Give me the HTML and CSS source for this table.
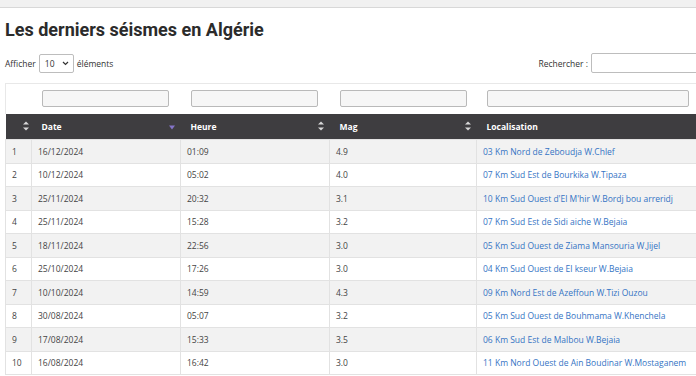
FILE: index.html
```html
<!DOCTYPE html>
<html lang="fr">
<head>
<meta charset="utf-8">
<title>Séismes</title>
<link rel="stylesheet" href="styles.css">
</head>
<body>
<div class="topbar"></div>
<div class="page">
  <h1 class="title">Les derniers séismes en Algérie</h1>
  <div class="controls">
    <div class="length">Afficher <span class="select">10 <svg width="7" height="5" viewBox="0 0 7 5"><path d="M1 1l2.5 2.5L6 1" fill="none" stroke="#333" stroke-width="1.2"/></svg></span> éléments</div>
    <div class="search">Rechercher : <span class="search-input"></span></div>
  </div>
  <table class="quakes">
    <colgroup><col class="c0"><col class="c1"><col class="c2"><col class="c3"><col class="c4"></colgroup>
    <thead>
      <tr class="filters">
        <td></td>
        <td><span class="finput"></span></td>
        <td><span class="finput"></span></td>
        <td><span class="finput"></span></td>
        <td><span class="finput wide"></span></td>
      </tr>
      <tr class="head">
        <th><span class="sort both"></span></th>
        <th>Date<span class="sort desc"></span></th>
        <th>Heure<span class="sort both"></span></th>
        <th>Mag<span class="sort both"></span></th>
        <th>Localisation<span class="sort both"></span></th>
      </tr>
    </thead>
    <tbody>
      <tr><td>1</td><td>16/12/2024</td><td>01:09</td><td>4.9</td><td><a href="#">03 Km Nord de Zeboudja W.Chlef</a></td></tr>
      <tr><td>2</td><td>10/12/2024</td><td>05:02</td><td>4.0</td><td><a href="#">07 Km Sud Est de Bourkika W.Tipaza</a></td></tr>
      <tr><td>3</td><td>25/11/2024</td><td>20:32</td><td>3.1</td><td><a href="#">10 Km Sud Ouest d'El M'hir W.Bordj bou arreridj</a></td></tr>
      <tr><td>4</td><td>25/11/2024</td><td>15:28</td><td>3.2</td><td><a href="#">07 Km Sud Est de Sidi aiche W.Bejaia</a></td></tr>
      <tr><td>5</td><td>18/11/2024</td><td>22:56</td><td>3.0</td><td><a href="#">05 Km Sud Ouest de Ziama Mansouria W.Jijel</a></td></tr>
      <tr><td>6</td><td>25/10/2024</td><td>17:26</td><td>3.0</td><td><a href="#">04 Km Sud Ouest de El kseur W.Bejaia</a></td></tr>
      <tr><td>7</td><td>10/10/2024</td><td>14:59</td><td>4.3</td><td><a href="#">09 Km Nord Est de Azeffoun W.Tizi Ouzou</a></td></tr>
      <tr><td>8</td><td>30/08/2024</td><td>05:07</td><td>3.2</td><td><a href="#">05 Km Sud Ouest de Bouhmama W.Khenchela</a></td></tr>
      <tr><td>9</td><td>17/08/2024</td><td>15:33</td><td>3.5</td><td><a href="#">06 Km Sud Est de Malbou W.Bejaia</a></td></tr>
      <tr><td>10</td><td>16/08/2024</td><td>16:42</td><td>3.0</td><td><a href="#">11 Km Nord Ouest de Ain Boudinar W.Mostaganem</a></td></tr>
    </tbody>
  </table>
</div>
</body>
</html>
```
FILE: styles.css
```css
html, body { margin: 0; padding: 0; overflow: hidden; background: #fff; }
body { font-family: "Open Sans", "Noto Sans", sans-serif; color: #333; font-size: 8.5px; width: 720px; }
.topbar { height: 7px; background: #f1f1f1; border-bottom: 1px solid #d8d8d8; }
.page { padding-left: 5px; }
.title { font-family: Roboto, "Liberation Sans", sans-serif; font-weight: 700; font-size: 18px; color: #2b2b2b; margin: 11px 0 0; line-height: 22px; }
.controls { display: flex; justify-content: space-between; align-items: center; margin-top: 12px; height: 20px; }
.length { display: flex; align-items: center; gap: 3px; }
.select { display: inline-flex; align-items: center; justify-content: space-between; box-sizing: border-box; width: 35px; height: 19px; border: 1px solid #bdbdbd; border-radius: 2px; padding: 0 4px 0 5px; }
.search { display: flex; align-items: center; gap: 3px; }
.search-input { display: inline-block; width: 129px; height: 20px; border: 1px solid #bdbdbd; border-radius: 2px; box-sizing: border-box; }
.quakes { border-collapse: collapse; table-layout: fixed; width: 705px; margin-top: 10px; }
.c0 { width: 26px; } .c1 { width: 149px; } .c2 { width: 149px; } .c3 { width: 147px; } .c4 { width: 234px; }
.filters td { height: 30px; box-sizing: border-box; padding: 0 0 0 10px; border-top: 1px solid #e8e8e8; vertical-align: middle; }
.filters td:first-child { border-left: 1px solid #e8e8e8; }
.finput { display: block; box-sizing: border-box; width: 127px; height: 17px; border: 1px solid #b9b9b9; border-radius: 2px; background: #f6f6f6; }
.finput.wide { width: 202px; }
.head th { background: #3e3d40; color: #fff; font-weight: 700; text-align: left; height: 26px; box-sizing: border-box; padding: 0 0 0 10px; position: relative; }
.sort { position: absolute; right: 6px; top: 50%; transform: translateY(-50%); width: 6px; height: 9px; }
.sort.both::before, .sort.both::after { content: ""; position: absolute; left: 0; border-left: 3px solid transparent; border-right: 3px solid transparent; }
.sort.both::before { top: 0; border-bottom: 3.5px solid #d8d8d8; }
.sort.both::after { bottom: 0; border-top: 3.5px solid #d8d8d8; }
.sort.desc::after { content: ""; position: absolute; left: 0; bottom: 1px; border-left: 3px solid transparent; border-right: 3px solid transparent; border-top: 4px solid #8474c8; }
.head th:first-child .sort { right: 3px; }
tbody td { height: 23.5px; box-sizing: border-box; padding: 0 0 0 6px; border: 1px solid #e2e2e2; color: #444; white-space: nowrap; overflow: hidden; }
tbody tr:nth-child(odd) td { background: #f2f2f2; }
tbody td a { color: #3574c4; text-decoration: none; }
```
